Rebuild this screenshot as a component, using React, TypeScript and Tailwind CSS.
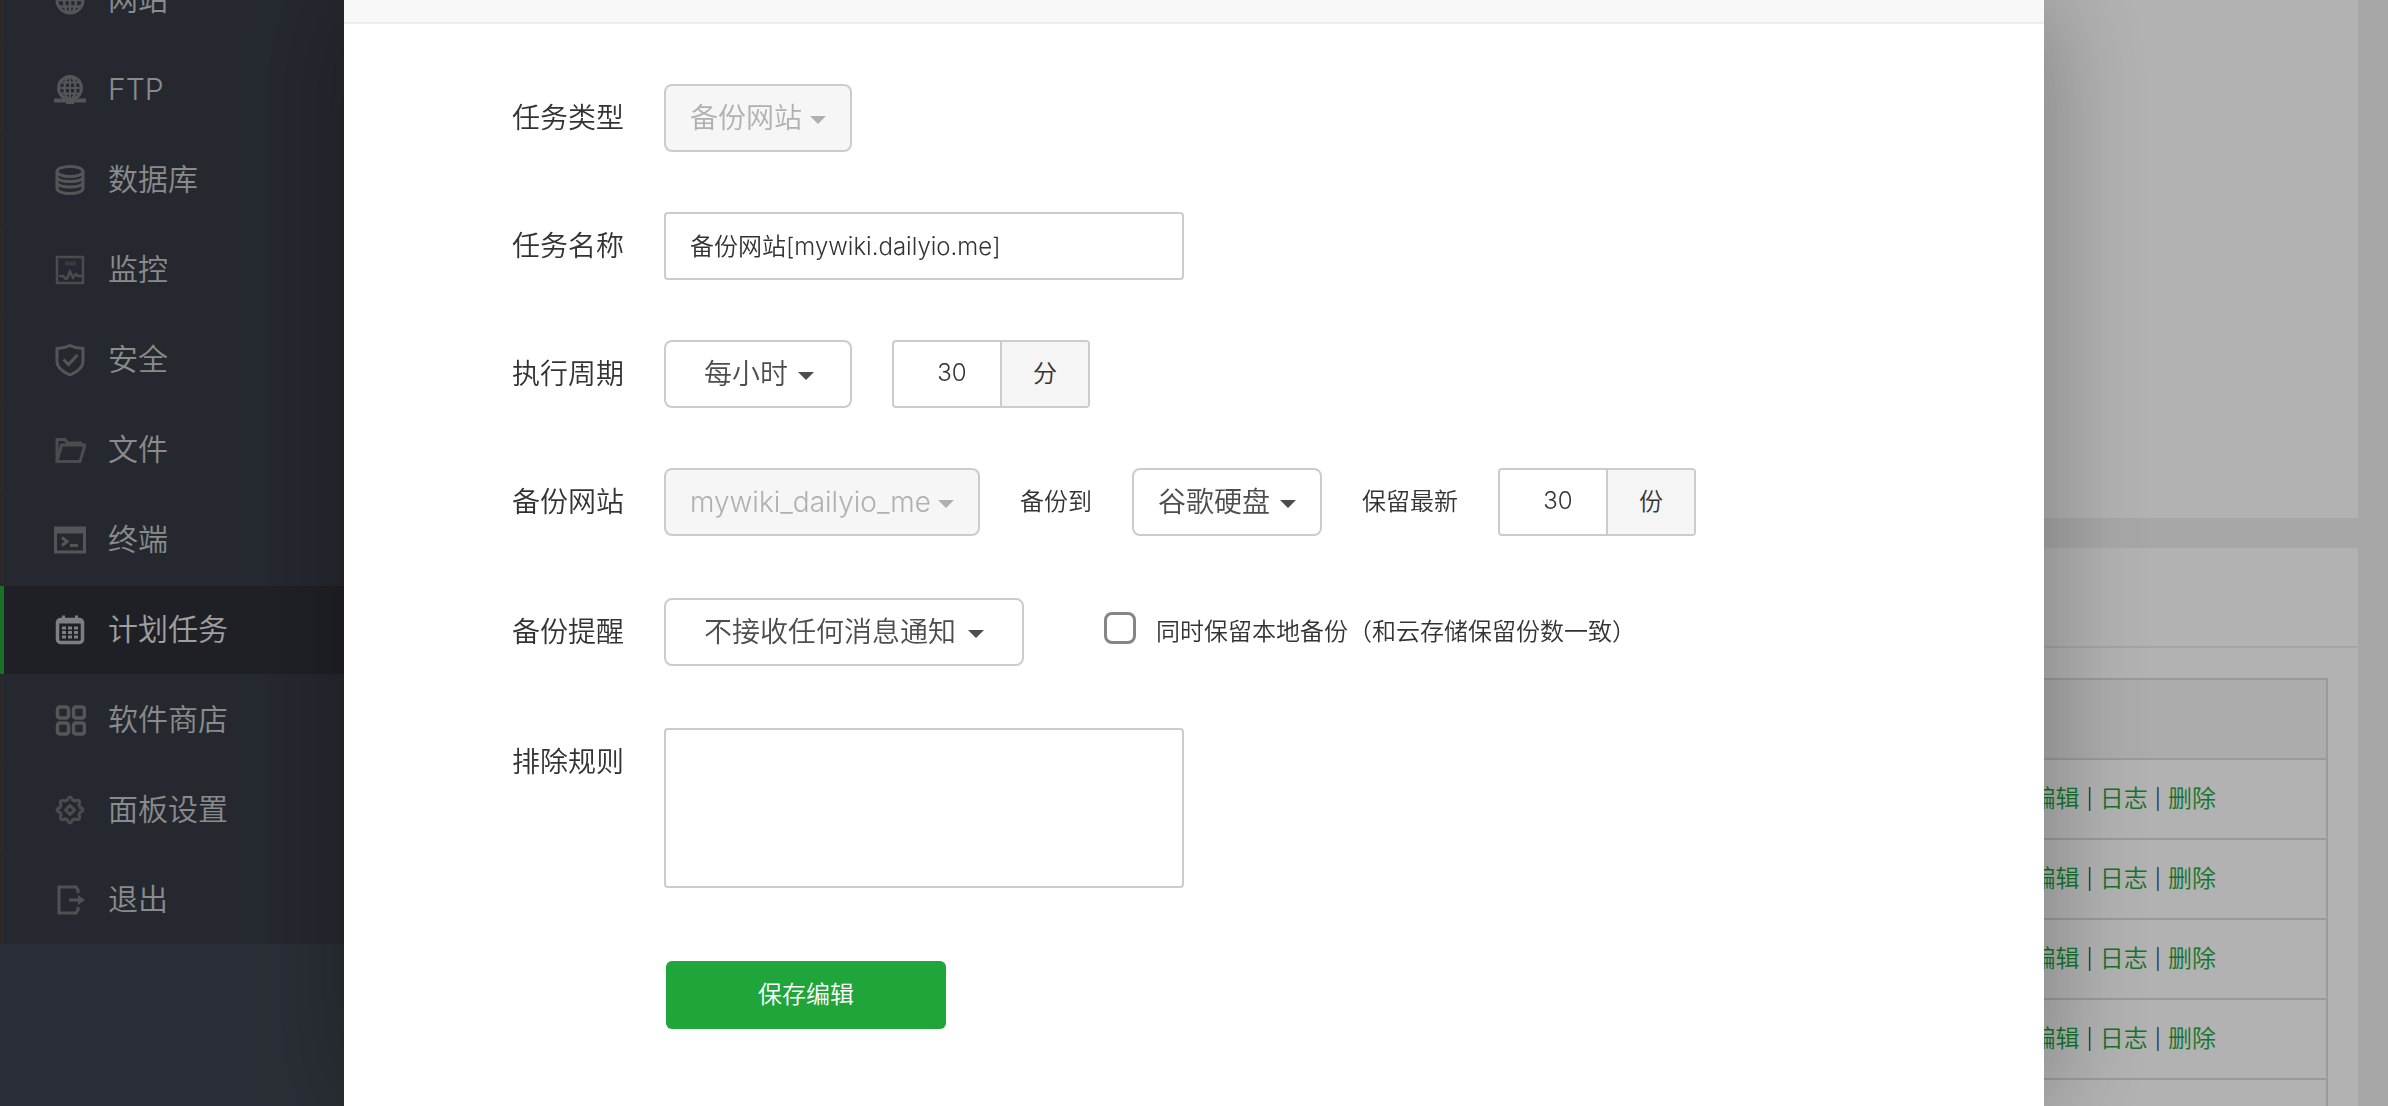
import { useState, type ReactNode } from 'react';
import clsx from 'clsx';

const svgProps = {
  width: 32,
  height: 32,
  viewBox: '0 0 32 32',
  fill: 'none',
  stroke: 'currentColor',
  strokeWidth: 2,
  'aria-hidden': true,
} as const;

const icons: Record<string, ReactNode> = {
  site: (
    <svg {...svgProps}>
      <circle cx="16" cy="16" r="13" strokeWidth="3" />
      <ellipse cx="16" cy="16" rx="6" ry="13" strokeWidth="2.5" />
      <path d="M16 3v26M3 16h26M5 9.500h22M5 22.500h22" strokeWidth="2.5" />
    </svg>
  ),
  ftp: (
    <svg {...svgProps}>
      <circle cx="16" cy="14" r="11.500" strokeWidth="3" />
      <ellipse cx="16" cy="14" rx="5.500" ry="11.500" strokeWidth="2.500" />
      <path d="M16 3v22M5 14h22M7 8.500h18M7 19.500h18" />
      <path d="M0 26.500h32" strokeWidth="4" />
      <path d="M12 27h8" strokeWidth="6" />
    </svg>
  ),
  database: (
    <svg {...svgProps} strokeWidth="3">
      <ellipse cx="16" cy="7.500" rx="13" ry="5" />
      <path d="M3 7.500v17c0 2.800 5.800 5 13 5s13-2.200 13-5v-17" />
      <path d="M3 13.500c1 2.500 6 4 13 4s12-1.500 13-4M3 19c1 2.500 6 4 13 4s12-1.500 13-4" />
    </svg>
  ),
  monitor: (
    <svg {...svgProps} opacity=".8">
      <rect x="3" y="3" width="26" height="26" strokeWidth="2.500" />
      <path d="M11 9.500h11" strokeWidth="4" opacity=".5" />
      <path d="M5 22h4l2 2.500h2l3-7 3 6 3-3.500 2 2h4" strokeWidth="2.500" />
    </svg>
  ),
  security: (
    <svg {...svgProps} strokeWidth="3">
      <path d="M16 1.500c4 2 8 3 13 3v13c0 6-5 10-13 13.500C8 27.500 3 23.500 3 17.500v-13c5 0 9-1 13-3z" />
      <path d="M9.500 15.500l5 5 9-9.500" />
    </svg>
  ),
  files: (
    <svg {...svgProps} strokeWidth="3" opacity=".8">
      <path d="M3 27V5.500h8l2.500 3.500h13v3" />
      <path d="M3 27L7.500 11H31l-5 16.500H3z" />
    </svg>
  ),
  terminal: (
    <svg {...svgProps}>
      <rect x="1.500" y="4" width="29" height="24" strokeWidth="3" />
      <path d="M1 6.500h30" strokeWidth="6" />
      <path d="M8 13.500l5 4-5 4" strokeWidth="3" />
      <path d="M16 21.500h8" strokeWidth="3" />
    </svg>
  ),
  cron: (
    <svg {...svgProps}>
      <rect x="3.500" y="5.500" width="25" height="23" rx="3" strokeWidth="3.500" />
      <path d="M3 7.500h26" strokeWidth="4" />
      <path d="M9.500 1.500v5M22.500 1.500v5" strokeWidth="3" />
      <path d="M8 14h16M8 18.500h16M8 23h16" strokeWidth="3" strokeDasharray="4 2" />
    </svg>
  ),
  store: (
    <svg {...svgProps} strokeWidth="3.500">
      <rect x="3.500" y="3" width="11" height="11" rx="2.500" />
      <rect x="19.500" y="3" width="11" height="11" rx="2.500" />
      <rect x="3.500" y="19" width="11" height="11" rx="2.500" />
      <rect x="19.500" y="19" width="11" height="11" rx="2.500" />
    </svg>
  ),
  settings: (
    <svg {...svgProps} strokeWidth="3" strokeLinejoin="round" opacity=".8">
      <path d="M13.500 6Q16 0 18.500 6l2.500 1q6-2.500 4 4l1 2.500q6 2.500 0 5l-1 2.500q2.500 6-4 4l-2.500 1q-2.500 6-5 0l-2.500-1q-6 2.500-4-4l-1-2.500q-6-2.500 0-5l1-2.500q-2.500-6 4-4z" />
      <path d="M16 11.500l4.500 4.500-4.500 4.500-4.500-4.500z" />
    </svg>
  ),
  logout: (
    <svg {...svgProps} strokeWidth="3" opacity=".9">
      <path d="M24 9V6l-2-3H5v26h17l2-3v-3" />
      <path d="M15 16h11" />
      <path d="M24 11l7 5-7 5z" fill="currentColor" stroke="none" />
    </svg>
  ),
};

const menu = [
  { key: 'site', label: '网站' },
  { key: 'ftp', label: 'FTP' },
  { key: 'database', label: '数据库' },
  { key: 'monitor', label: '监控' },
  { key: 'security', label: '安全' },
  { key: 'files', label: '文件' },
  { key: 'terminal', label: '终端' },
  { key: 'cron', label: '计划任务' },
  { key: 'store', label: '软件商店' },
  { key: 'settings', label: '面板设置' },
  { key: 'logout', label: '退出' },
];

export default function App() {
  return (
    <div className="relative flex h-screen overflow-hidden bg-[#f0f0f0] font-['Inter','Noto_Sans_CJK_SC',sans-serif] text-2xl font-[350] text-[#333]">
      <Sidebar />
      <TaskList />
      <div className="fixed inset-0 bg-black/30" />
      <div className="fixed inset-0 flex justify-center">
        <EditDialog />
      </div>
    </div>
  );
}

function Sidebar() {
  return (
    <aside className="w-90 shrink-0 bg-[#3c434e]">
      {/* scrolled: the first entry is half out of view */}
      <nav className="-mt-11 bg-[#353b44]">
        <ul className="flex flex-col gap-0.5">
          {menu.map(({ key, label }) => (
            <li key={key}>
              <a
                href={`#${key}`}
                className={clsx(
                  'flex h-22 items-center gap-[22px] border-l-4 pl-[50px] text-[30px]',
                  key === 'cron' ? 'border-[#20a53a] bg-[#2c2f36] text-[#e4e4e4]' : 'border-[#3e3c3c] text-[#c4c7ca]',
                )}
              >
                <span className={key === 'cron' ? 'text-[#b4b6b8]' : 'text-[#787c7f]'}>{icons[key]}</span>
                {label}
              </a>
            </li>
          ))}
        </ul>
      </nav>
    </aside>
  );
}

function TaskList() {
  return (
    <main className="flex grow flex-col gap-[30px] px-[30px]">
      <section className="h-[518px] shrink-0 bg-white" />
      <section className="grow bg-white">
        <div className="h-25 border-b-2 border-[#ececec]" />
        <div className="px-[30px] pt-[30px]">
          <table className="w-full border-collapse border-2 border-[#ddd]">
            <thead>
              <tr className="h-20 border-b-2 border-[#ddd] bg-[#f6f6f6]">
                <th aria-label="操作" />
              </tr>
            </thead>
            <tbody>
              {[1, 2, 3, 4, 5].map((id) => (
                <tr key={id} className="h-20 border-b-2 border-[#ddd]">
                  <td className="pr-[110px]">
                    <div className="flex items-center justify-end gap-[7px]">
                      <a href="#edit" className="text-[#20a53a]">编辑</a>
                      <span className="text-xl">|</span>
                      <a href="#log" className="text-[#20a53a]">日志</a>
                      <span className="text-xl">|</span>
                      <a href="#delete" className="text-[#20a53a]">删除</a>
                    </div>
                  </td>
                </tr>
              ))}
            </tbody>
          </table>
        </div>
      </section>
    </main>
  );
}

function EditDialog() {
  const [name, setName] = useState('备份网站[mywiki.dailyio.me]');
  const [rules, setRules] = useState('');
  const [keepLocal, setKeepLocal] = useState(false);

  return (
    <section role="dialog" className="w-full max-w-[1700px] bg-white shadow-[2px_2px_100px_rgba(0,0,0,0.3)]">
      <div className="h-6 border-b-2 border-[#eee] bg-[#f8f8f8]" />
      <form className="pt-15" onSubmit={(e) => e.preventDefault()}>
        <div className="flex flex-col gap-[60px]">
          <Row id="type" label="任务类型">
            <Select id="type" value="备份网站" className="w-[188px] px-6" caret="right-[26px]" disabled />
          </Row>
          <Row id="name" label="任务名称">
            <input
              id="name"
              value={name}
              onChange={(e) => setName(e.target.value)}
              className="h-17 w-130 rounded-sm border-2 border-[#ccc] px-6 pb-1 outline-none"
            />
          </Row>
          <Row id="cycle" label="执行周期">
            <Select id="cycle" value="每小时" className="w-[188px] px-[38px]" caret="right-[38px]" />
            <NumberGroup label="分钟" unit="分" />
          </Row>
          <Row id="site" label="备份网站">
            <Select id="site" value="mywiki_dailyio_me" className="w-[316px] px-6" caret="right-[26px]" disabled />
            <label htmlFor="target">备份到</label>
            <Select id="target" value="谷歌硬盘" className="w-[190px] px-6" caret="right-[26px]" />
            <span>保留最新</span>
            <NumberGroup label="保留最新" unit="份" />
          </Row>
        </div>
        <div className="mt-[62px] flex flex-col gap-[62px]">
          <Row id="notice" label="备份提醒">
            <Select id="notice" value="不接收任何消息通知" className="w-90 px-[38px]" caret="right-10" />
            <label className="ml-10 flex items-center gap-5">
              <input
                type="checkbox"
                checked={keepLocal}
                onChange={(e) => setKeepLocal(e.target.checked)}
                className="mb-2 size-8 appearance-none rounded-lg border-3 border-[#858585] bg-white checked:bg-[#20a53a]"
              />
              同时保留本地备份（和云存储保留份数一致）
            </label>
          </Row>
          <Row id="rules" label="排除规则">
            <textarea
              id="rules"
              value={rules}
              onChange={(e) => setRules(e.target.value)}
              className="h-40 w-130 resize-none rounded-sm border-2 border-[#ccc] px-6 py-4 outline-none"
            />
          </Row>
        </div>
        <div className="mt-[73px] pl-[322px]">
          <button type="submit" className="h-17 w-70 rounded-md bg-[#20a53a] text-white">
            保存编辑
          </button>
        </div>
      </form>
    </section>
  );
}

function Row({ id, label, children }: { id: string; label: string; children: ReactNode }) {
  return (
    <div className="flex items-start gap-10">
      <label htmlFor={id} className="w-70 shrink-0 text-right text-[28px] leading-17">
        {label}
      </label>
      <div className="flex items-center gap-10">{children}</div>
    </div>
  );
}

type SelectProps = { id: string; value: string; className: string; caret: string; disabled?: boolean };

function Select({ id, value, className, caret, disabled }: SelectProps) {
  return (
    <div className={clsx('relative', disabled ? 'text-[#b0b0b0]' : 'text-[#4d4d4d]')}>
      <select
        id={id}
        disabled={disabled}
        className={clsx(
          'h-17 appearance-none rounded-lg border-2 border-[#ccc] pt-0.5 text-[28px] opacity-100 outline-none',
          disabled ? 'bg-[#f6f6f6]' : 'bg-white',
          className,
        )}
      >
        <option>{value}</option>
      </select>
      <svg
        width="16"
        height="8"
        viewBox="0 0 16 8"
        fill="currentColor"
        className={clsx('pointer-events-none absolute top-8', caret)}
      >
        <path d="M0 0h16L8 8z" />
      </svg>
    </div>
  );
}

function NumberGroup({ label, unit }: { label: string; unit: string }) {
  const [value, setValue] = useState('30');
  return (
    <div className="flex h-17 w-[198px] overflow-hidden rounded-sm border-2 border-[#ccc]">
      <input
        type="number"
        aria-label={label}
        value={value}
        onChange={(e) => setValue(e.target.value)}
        className="w-[106px] appearance-none pb-0.5 pl-2.5 text-center outline-none [&::-webkit-inner-spin-button]:appearance-none"
      />
      <span className="grid grow place-items-center border-l-2 border-[#ccc] bg-[#f5f5f5]">{unit}</span>
    </div>
  );
}
